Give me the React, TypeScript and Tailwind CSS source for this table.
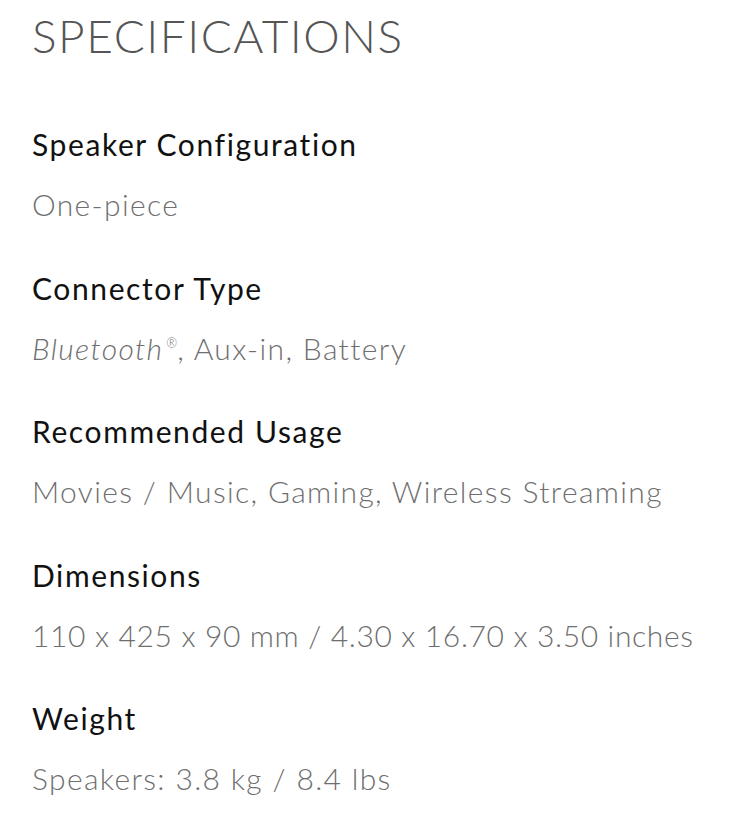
import React from 'react';

interface Spec {
  label: string;
  value: React.ReactNode;
  tracking?: string;
}

const specs: Spec[] = [
  { label: 'Speaker Configuration', value: 'One-piece' },
  {
    label: 'Connector Type',
    value: (
      <>
        <i>Bluetooth</i>
        <sup className="text-[13px] -top-[12px] ml-[3px] tracking-normal">®</sup>, Aux-in, Battery
      </>
    ),
  },
  { label: 'Recommended Usage', value: 'Movies / Music, Gaming, Wireless Streaming' },
  {
    label: 'Dimensions',
    value: '110 x 425 x 90 mm / 4.30 x 16.70 x 3.50 inches',
    tracking: 'tracking-[0.65px]',
  },
  { label: 'Weight', value: 'Speakers: 3.8 kg / 8.4 lbs' },
];

const App: React.FC = () => {
  return (
    <div className="min-h-[821px] bg-white pl-[32px] pt-[13px] font-['Lato',sans-serif]">
      <h2 className="text-[46px] leading-[46px] font-light text-[#555555] tracking-[1.5px]">SPECIFICATIONS</h2>

      <div className="mt-[55px] flex flex-col gap-[23.5px]">
        {specs.map(spec => (
          <div key={spec.label}>
            <h3 className="text-[30px] leading-[60px] font-normal text-[#111111] tracking-[1.6px]">{spec.label}</h3>
            <p className={`text-[30px] leading-[60px] font-light text-[#6f6f6f] ${spec.tracking ?? 'tracking-[1.35px]'}`}>
              {spec.value}
            </p>
          </div>
        ))}
      </div>
    </div>
  );
};

export default App;
